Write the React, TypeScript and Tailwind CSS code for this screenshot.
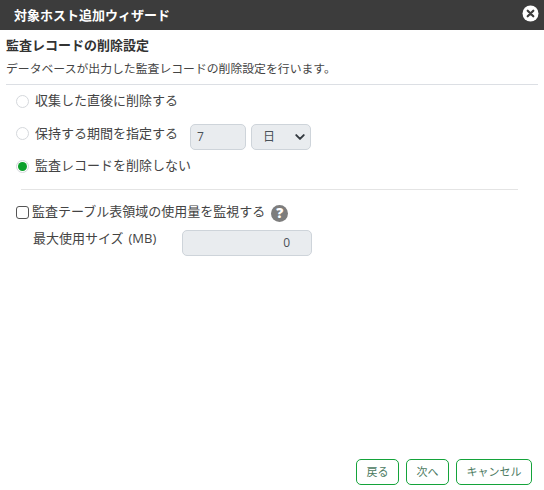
import React from "react";

function Radio({ checked }: { checked?: boolean }) {
  return (
    <span className="w-[13px] h-[13px] rounded-full border border-[#d5d8dc] bg-white flex items-center justify-center shrink-0">
      {checked && <span className="w-[9px] h-[9px] rounded-full bg-[#0ca02c]" />}
    </span>
  );
}

function Btn({ children, w }: { children: React.ReactNode; w: string }) {
  return (
    <button className={`${w} h-[26px] rounded-[5px] border border-[#14a33a] bg-white text-[11px] text-[#4b7a5f] flex items-center justify-center`}>
      {children}
    </button>
  );
}

export default function App() {
  return (
    <div className="w-[544px] h-[490px] bg-white flex flex-col text-[#333] font-['Open_Sans','Noto_Sans_CJK_JP',sans-serif] overflow-hidden">
      <div className="h-[30px] shrink-0 bg-[#3c3c3c] flex items-center justify-between pl-[14px] pr-[5px]">
        <span className="text-[13px] font-bold text-white leading-none">対象ホスト追加ウィザード</span>
        <svg width="17" height="17" viewBox="0 0 17 17" className="-mt-[4px]">
          <circle cx="8.5" cy="8.5" r="8" fill="#fff" />
          <path d="M5.7 5.7l5.6 5.6M11.3 5.7l-5.6 5.6" stroke="#3c3c3c" strokeWidth="2.2" strokeLinecap="round" />
        </svg>
      </div>

      <div className="flex-1 flex flex-col px-[6px]">
        <div className="pt-[6px] h-[30px] text-[13px] font-bold leading-[19px] text-[#333]">監査レコードの削除設定</div>
        <div className="h-[24px] text-[11.85px] leading-[16px] text-[#444]">データベースが出力した監査レコードの削除設定を行います。</div>
        <div className="h-px bg-[#dcdfe4]" />

        <div className="flex items-center gap-[6px] pl-[10px] h-[32px] text-[13px] text-[#444]">
          <Radio />
          <span>収集した直後に削除する</span>
        </div>

        <div className="flex items-start pl-[10px] h-[26px] mt-[7px] text-[13px] text-[#444]">
          <span className="mt-[3px]"><Radio /></span>
          <span className="ml-[6px] leading-[18px]">保持する期間を指定する</span>
          <div className="ml-[12px] w-[56px] h-[26px] rounded-[5px] border border-[#ced4da] bg-[#e9ecef] text-[12px] flex items-center pl-[6px] text-[#495057]">7</div>
          <div className="ml-[5px] w-[60px] h-[26px] rounded-[5px] border border-[#ced4da] bg-[#e9ecef] text-[12px] flex items-center justify-between pl-[11px] pr-[4px] text-[#495057]">
            <span>日</span>
            <svg width="12" height="12" viewBox="0 0 16 16">
              <path d="M3 5.5l5 5 5-5" fill="none" stroke="#343a40" strokeWidth="2.6" strokeLinecap="round" strokeLinejoin="round" />
            </svg>
          </div>
        </div>

        <div className="flex items-center gap-[6px] pl-[10px] h-[20px] mt-[6px] text-[13px] text-[#444]">
          <Radio checked />
          <span>監査レコードを削除しない</span>
        </div>

        <div className="h-px bg-[#e4e4e4] ml-[15px] mr-[20px] mt-[13px]" />

        <div className="flex items-center pl-[10px] h-[30px] mt-[7px] text-[13px] text-[#444]">
          <span className="w-[13px] h-[13px] rounded-[3px] border border-[#555] bg-white shrink-0 mt-[1px]" />
          <span className="ml-[3px]">監査テーブル表領域の使用量を監視する</span>
          <span className="ml-[6px] mt-[2px] w-[17px] h-[17px] rounded-full bg-[#7d7d7d] text-white text-[14px] font-extrabold flex items-center justify-center leading-none">?</span>
        </div>

        <div className="flex items-center pl-[27px] h-[26px] mt-[3px] text-[13px] text-[#444]">
          <span className="w-[149px] -mt-[9px]">最大使用サイズ <span className="ml-[1.5px]">(MB)</span></span>
          <div className="w-[130px] h-[26px] rounded-[5px] border border-[#ced4da] bg-[#e9ecef] text-[12px] flex items-center justify-end pr-[21px] text-[#495057]">0</div>
        </div>

        <div className="flex-1" />

        <div className="flex justify-end gap-[7px] pb-[5px] pr-[6px]">
          <Btn w="w-[43px]">戻る</Btn>
          <Btn w="w-[43px]">次へ</Btn>
          <Btn w="w-[76px]">キャンセル</Btn>
        </div>
      </div>
    </div>
  );
}
